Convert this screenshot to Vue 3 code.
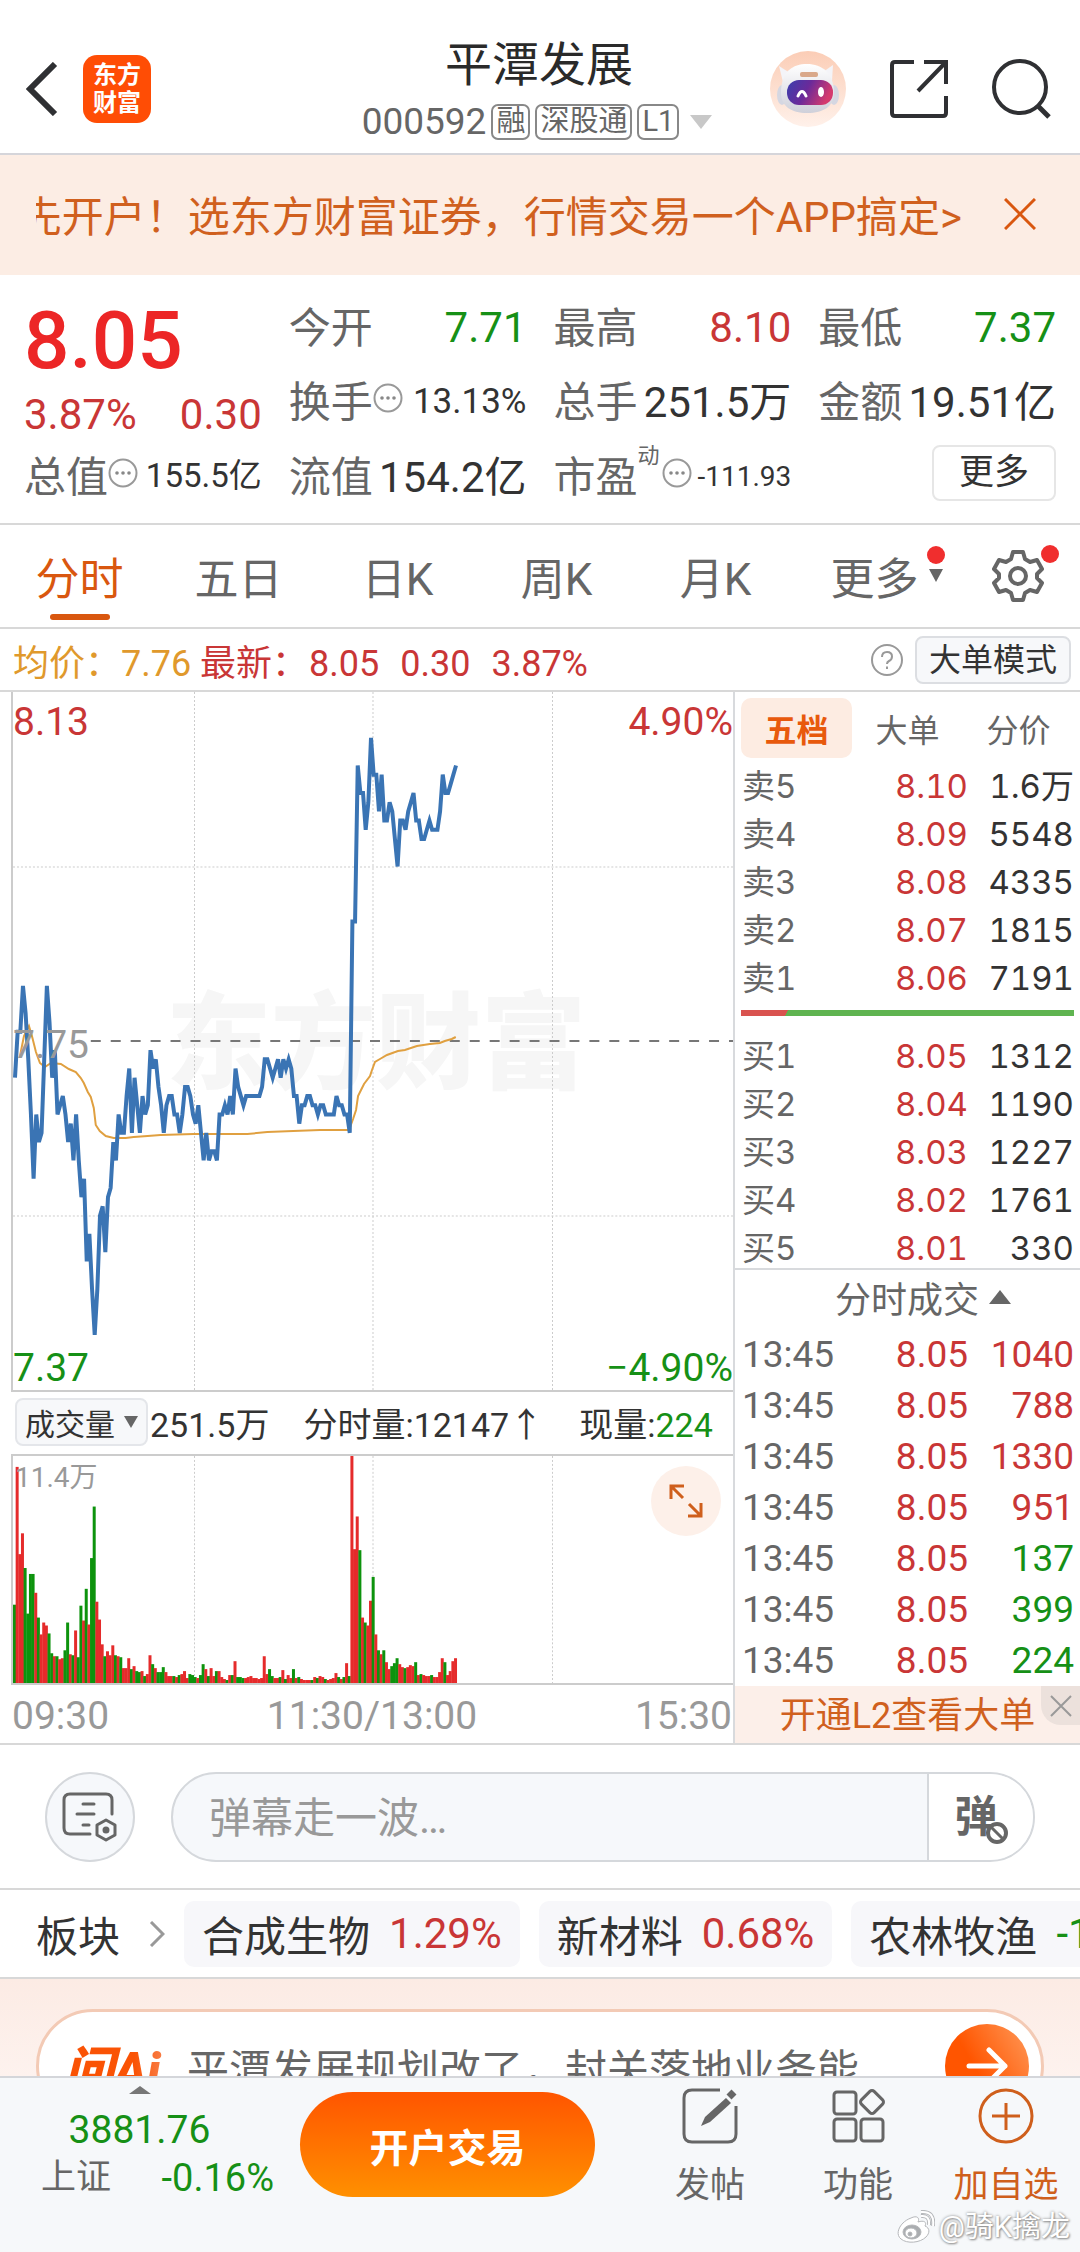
<template>
  <div class="page">
    <!-- Шапка -->
    <header class="header">
      <div class="header-side">
        <button class="icon-btn" aria-label="返回">
          <svg width="32" height="54" viewBox="0 0 32 54" fill="none" stroke="#2f3033" stroke-width="6">
            <path d="M29 2 L4 27 L29 52" />
          </svg>
        </button>
        <div class="logo"><span>东方</span><span>财富</span></div>
      </div>

      <div class="header-center">
        <h1 class="title">平潭发展</h1>
        <div class="code">
          <span>000592</span>
          <span class="tag">融</span>
          <span class="tag">深股通</span>
          <span class="tag">L1</span>
          <svg class="code-arrow" width="22" height="14" viewBox="0 0 22 14"><path d="M0 0H22L11 14Z" fill="#c8c8c8" /></svg>
        </div>
      </div>

      <div class="header-side header-right">
        <button class="icon-btn" aria-label="助手">
          <svg width="76" height="76" viewBox="0 0 76 76">
            <defs>
              <linearGradient id="halo" x1="0" y1="0" x2="0" y2="1">
                <stop offset="0" stop-color="#fbcdb6" />
                <stop offset="1" stop-color="#fff1ea" />
              </linearGradient>
              <linearGradient id="visor" x1="0" y1="0" x2="1" y2="0.3">
                <stop offset="0" stop-color="#3a3fae" />
                <stop offset="0.5" stop-color="#6a2a9a" />
                <stop offset="1" stop-color="#d43a6e" />
              </linearGradient>
              <linearGradient id="helmet" x1="0" y1="0" x2="0" y2="1">
                <stop offset="0" stop-color="#ffffff" />
                <stop offset="1" stop-color="#cfd0da" />
              </linearGradient>
            </defs>
            <circle cx="38" cy="38" r="38" fill="url(#halo)" />
            <path d="M9 15 L20 22 L13 31 Z" fill="#f4f4f8" />
            <path d="M63 14 L53 21 L62 30 Z" fill="#f4f4f8" />
            <ellipse cx="12" cy="44" rx="5" ry="10" fill="#d5d7e2" />
            <ellipse cx="64" cy="44" rx="5" ry="10" fill="#d5d7e2" />
            <path d="M11 42 C11 20 23 13 37 13 C52 13 64 22 64 42 C64 55 54 62 37 62 C21 62 11 55 11 42 Z" fill="url(#helmet)" />
            <rect x="30" y="21" width="18" height="5" rx="2" fill="#d9a88a" />
            <rect x="17" y="29" width="46" height="25" rx="12" fill="url(#visor)" />
            <path d="M28 45 q4 -9 8 0" fill="none" stroke="#fff" stroke-width="3" stroke-linecap="round" />
            <ellipse cx="51" cy="41" rx="3" ry="5" fill="#fff" />
          </svg>
        </button>
        <button class="icon-btn" aria-label="分享">
          <svg width="58" height="58" viewBox="0 0 58 58" fill="none" stroke="#2f3033" stroke-width="4">
            <path d="M24 2H5q-3 0-3 3V53q0 3 3 3H53q3 0 3-3V36" />
            <path d="M34 2H56V24M56 2L28 31" />
          </svg>
        </button>
        <button class="icon-btn" aria-label="搜索">
          <svg width="60" height="60" viewBox="0 0 60 60" fill="none" stroke="#2f3033" stroke-width="4">
            <circle cx="28" cy="28" r="26" />
            <path d="M46 47L57 58" stroke-width="5" />
          </svg>
        </button>
      </div>
    </header>

    <!-- Рекламная строка -->
    <div class="promo">
      <a href="#" class="promo-text"><span>先开户！选东方财富证券，行情交易一个APP搞定&gt;</span></a>
      <button class="icon-btn" aria-label="关闭">
        <svg width="32" height="32" viewBox="0 0 32 32" stroke="#d9570f" stroke-width="3"><path d="M1 1L31 31M31 1L1 31" /></svg>
      </button>
    </div>

    <!-- Котировка -->
    <section class="quote">
      <div class="price-box">
        <strong class="price">8.05</strong>
        <div class="price-diff"><span>3.87%</span><span>0.30</span></div>
      </div>
      <div v-for="q in quotes" :key="q.label" class="quote-item">
        <span class="quote-label">{{ q.label }}<sup v-if="q.sup" class="quote-sup">{{ q.sup }}</sup></span>
        <svg v-if="q.dots" class="dots" :class="{ shifted: q.sup }" width="30" height="30" viewBox="0 0 30 30">
          <circle cx="15" cy="15" r="13.5" fill="none" stroke="#999" stroke-width="2" />
          <circle v-for="x in [9, 15, 21]" :key="x" :cx="x" cy="15" r="1.8" fill="#888" />
        </svg>
        <span class="quote-value" :class="[q.size, q.color, { num: q.num }]">{{ q.value }}</span>
      </div>
      <div class="quote-item quote-more"><button class="more-btn">更多</button></div>
    </section>

    <!-- Периоды графика -->
    <nav class="tabs">
      <button v-for="(t, i) in tabs" :key="t" class="tab" :class="{ active: i === 0 }">
        {{ t }}
        <span v-if="t === '更多'" class="tab-mark">
          <i class="dot"></i>
          <svg width="14" height="13" viewBox="0 0 14 13"><path d="M0 0H14L7 13Z" fill="#666" /></svg>
        </span>
      </button>
      <button class="icon-btn gear" aria-label="设置">
        <svg width="52" height="52" viewBox="0 0 52 52" fill="none" stroke="#666" stroke-width="4" stroke-linejoin="round">
          <path d="M21 2H31L33 9L38 12L45 10L50 19L45 24V28L50 33L45 42L38 40L33 43L31 50H21L19 43L14 40L7 42L2 33L7 28V24L2 19L7 10L14 12L19 9Z" />
          <circle cx="26" cy="26" r="8" />
        </svg>
        <i class="dot"></i>
      </button>
    </nav>

    <div class="info">
      <div class="info-avg"><span>均价：</span><span>7.76</span></div>
      <div class="info-last">
        <span>最新：</span><span>8.05</span><span>0.30</span><span>3.87%</span>
      </div>
      <svg class="help" width="32" height="32" viewBox="0 0 32 32" fill="none" stroke="#999" stroke-width="2">
        <circle cx="16" cy="16" r="15" />
        <path d="M11 13q0-5 5-5t5 4.500q0 3-3 4.500q-2 1-2 3" />
        <path d="M16 22.500v2.500" />
      </svg>
      <button class="mode-btn">大单模式</button>
    </div>

    <main class="main">
      <div class="left">
        <div class="chart price-chart">
          <div class="brand">东方财富</div>
          <svg viewBox="0 0 722 698" preserveAspectRatio="none">
            <g class="grid">
              <path d="M182 0V698M361 0V698M541 0V698M0 175H722M0 524H722" />
            </g>
            <path d="M78 349H722" stroke="#777" stroke-width="2" stroke-dasharray="10 10" />
            <path :d="avgPath" fill="none" stroke="#e0a040" stroke-width="2" />
            <polyline :points="pricePoints" fill="none" stroke="#3a74b4" stroke-width="4" />
          </svg>
          <span class="lbl top-left red">8.13</span>
          <span class="lbl top-right red">4.90%</span>
          <span class="lbl mid-left">7.75</span>
          <span class="lbl bottom-left green">7.37</span>
          <span class="lbl bottom-right green">−4.90%</span>
        </div>

        <div class="vol-info">
          <button class="vol-btn">成交量<svg width="14" height="12" viewBox="0 0 14 12"><path d="M0 0H14L7 12Z" fill="#666" /></svg></button>
          <span class="vol-total">251.5万</span>
          <span class="vol-minute">分时量:12147↑</span>
          <span>现量:<b class="green">224</b></span>
        </div>

        <div class="chart vol-chart">
          <svg viewBox="0 0 722 229" preserveAspectRatio="none">
            <g class="grid"><path d="M182 0V229M361 0V229M541 0V229" /></g>
            <rect
              v-for="(v, i) in volumes"
              :key="i"
              :x="i * step"
              :y="229 - Math.abs(v)"
              width="3"
              :height="Math.abs(v)"
              :fill="v > 0 ? '#e52b2b' : '#0d930d'"
            />
          </svg>
          <span class="vol-max">11.4万</span>
          <button class="expand" aria-label="放大">
            <svg width="34" height="34" viewBox="0 0 34 34" fill="none" stroke="#cf5f1c" stroke-width="3">
              <path d="M2 15V2H15M2 2L14 14M32 19V32H19M32 32L20 20" />
            </svg>
          </button>
        </div>

        <div class="axis"><span>09:30</span><span>11:30/13:00</span><span>15:30</span></div>
      </div>

      <!-- Стакан и лента сделок -->
      <aside class="right">
        <div class="book-tabs">
          <button class="active">五档</button>
          <button>大单</button>
          <button>分价</button>
        </div>
        <table class="book">
          <tbody>
            <tr v-for="r in sells" :key="r[0]">
              <th scope="row">{{ r[0] }}</th>
              <td class="red">{{ r[1] }}</td>
              <td>{{ r[2] }}</td>
            </tr>
          </tbody>
        </table>
        <div class="ratio"></div>
        <table class="book">
          <tbody>
            <tr v-for="r in buys" :key="r[0]">
              <th scope="row">{{ r[0] }}</th>
              <td class="red">{{ r[1] }}</td>
              <td>{{ r[2] }}</td>
            </tr>
          </tbody>
        </table>
        <button class="deals-head">
          分时成交<svg width="22" height="14" viewBox="0 0 22 14"><path d="M0 14H22L11 0Z" fill="#666" /></svg>
        </button>
        <table class="book deals">
          <tbody>
            <tr v-for="(d, i) in deals" :key="i">
              <th scope="row">13:45</th>
              <td class="red">8.05</td>
              <td :class="d > 0 ? 'red' : 'green'">{{ Math.abs(d) }}</td>
            </tr>
          </tbody>
        </table>
        <div class="level2">
          <a href="#">开通L2查看大单</a>
          <button aria-label="关闭">
            <svg width="22" height="22" viewBox="0 0 22 22" stroke="#999" stroke-width="2"><path d="M1 1L21 21M21 1L1 21" /></svg>
          </button>
        </div>
      </aside>
    </main>

    <!-- Комментарии -->
    <div class="danmu">
      <button class="danmu-set" aria-label="弹幕设置">
        <svg width="56" height="50" viewBox="0 0 56 50" fill="none" stroke="#666" stroke-width="3" stroke-linecap="round">
          <path d="M28 42H8q-6 0-6-6V8q0-6 6-6H44q6 0 6 6V22" />
          <path d="M21 12H32M15 22H32M21 33H27" />
          <path d="M44 28L53 33V43L44 48L35 43V33Z" stroke-linejoin="round" />
          <circle cx="44" cy="38" r="2" fill="#666" />
        </svg>
      </button>
      <div class="danmu-box">
        <input type="text" placeholder="弹幕走一波…" aria-label="弹幕" />
        <button class="danmu-toggle" aria-label="关闭弹幕">
          弹
          <svg width="24" height="24" viewBox="0 0 24 24" stroke="#666" stroke-width="4">
            <circle cx="12" cy="12" r="9" fill="#fff" />
            <path d="M6 6L18 18" stroke-width="3" />
          </svg>
        </button>
      </div>
    </div>

    <!-- Сектора -->
    <div class="sectors">
      <a href="#" class="sectors-title">
        板块
        <svg width="16" height="26" viewBox="0 0 16 26" fill="none" stroke="#999" stroke-width="3"><path d="M2 1L14 13L2 25" /></svg>
      </a>
      <a v-for="s in sectors" :key="s.name" href="#" class="chip">
        <span>{{ s.name }}</span>
        <span :class="s.up ? 'red' : 'green'">{{ s.value }}</span>
      </a>
    </div>

    <div class="ai">
      <div class="ai-pill">
        <span class="ai-logo">问Ai</span>
        <span class="ai-text">平潭发展规划改了，封关落地业务能</span>
        <button class="ai-go" aria-label="提问">
          <svg width="42" height="40" viewBox="0 0 42 40" fill="none" stroke="#fff" stroke-width="5" stroke-linecap="round" stroke-linejoin="round">
            <path d="M3 20H39M23 4L39 20L23 36" />
          </svg>
        </button>
      </div>
    </div>

    <!-- Нижняя панель -->
    <footer class="bottom">
      <div class="index">
        <div class="index-top">
          <svg width="22" height="8" viewBox="0 0 22 8"><path d="M0 8H22L11 0Z" fill="#777" /></svg>
          <span class="index-value green">3881.76</span>
        </div>
        <div class="index-row"><span>上证</span><span class="index-diff green">-0.16%</span></div>
      </div>
      <button class="trade">开户交易</button>
      <div class="actions">
        <button class="action">
          <svg width="56" height="56" viewBox="0 0 56 56" fill="none" stroke="#666" stroke-width="3">
            <path d="M38 2H10q-8 0-8 8V46q0 8 8 8H46q8 0 8-8V18" />
            <path d="M44 10L49 15L28 34L19 38L23 29Z" fill="#666" stroke="none" />
            <path d="M47 9L52 4" stroke-width="7" />
          </svg>
          发帖
        </button>
        <button class="action">
          <svg width="56" height="56" viewBox="0 0 56 56" fill="none" stroke="#666" stroke-width="3">
            <rect x="4" y="4" width="22" height="22" rx="3" />
            <rect x="4" y="31" width="22" height="22" rx="3" />
            <rect x="31" y="31" width="22" height="22" rx="3" />
            <rect x="33" y="5" width="18" height="18" rx="3" transform="rotate(45 42 14)" />
          </svg>
          功能
        </button>
        <button class="action orange">
          <svg width="56" height="56" viewBox="0 0 56 56" fill="none" stroke="#cf5f1c" stroke-width="3">
            <circle cx="28" cy="28" r="26" />
            <path d="M28 15V42M14 28H42" />
          </svg>
          加自选
        </button>
      </div>
      <div class="author">
        <svg width="38" height="34" viewBox="0 0 38 34" fill="#fff" stroke="#b5b7ba" stroke-width="1">
          <path d="M14 8C20 5 23 8 21 12C27 10 30 12 28 16C33 18 33 23 29 27C23 33 10 34 4 29C-1 25 1 18 6 13C8 11 11 9 14 8Z" />
          <ellipse cx="15" cy="22" rx="9" ry="7" fill="#aaadb0" />
          <ellipse cx="14" cy="23" rx="6" ry="5" />
          <circle cx="13" cy="24" r="2" fill="#aaadb0" />
          <path d="M24 6Q33 5 32 15M24 2Q38 1 36 16" fill="none" stroke="#b5b7ba" stroke-width="4" />
          <path d="M24 6Q33 5 32 15M24 2Q38 1 36 16" fill="none" stroke="#fff" stroke-width="2" />
        </svg>
        @骑K擒龙
      </div>
    </footer>
  </div>
</template>

<script setup>
import { computed } from "vue";

const quotes = [
  { label: "今开", value: "7.71", color: "green", num: true },
  { label: "最高", value: "8.10", color: "red", num: true },
  { label: "最低", value: "7.37", color: "green", num: true },
  { label: "换手", value: "13.13%", dots: true, size: "s35", num: true },
  { label: "总手", value: "251.5万" },
  { label: "金额", value: "19.51亿" },
  { label: "总值", value: "155.5亿", dots: true, size: "s33" },
  { label: "流值", value: "154.2亿" },
  { label: "市盈", sup: "动", value: "-111.93", dots: true, size: "s28", num: true },
];

const tabs = ["分时", "五日", "日K", "周K", "月K", "更多"];

const sells = [
  ["卖5", "8.10", "1.6万"],
  ["卖4", "8.09", "5548"],
  ["卖3", "8.08", "4335"],
  ["卖2", "8.07", "1815"],
  ["卖1", "8.06", "7191"],
];
const buys = [
  ["买1", "8.05", "1312"],
  ["买2", "8.04", "1190"],
  ["买3", "8.03", "1227"],
  ["买4", "8.02", "1761"],
  ["买5", "8.01", "330"],
];

// минус — продажа
const deals = [1040, 788, 1330, 951, -137, -399, -224];

const sectors = [
  { name: "合成生物", value: "1.29%", up: true },
  { name: "新材料", value: "0.68%", up: true },
  { name: "农林牧渔", value: "-1", up: false },
];

// цена в фэнях, по точке на минуту
const prices = [
  771, 776, 776, 781, 778, 773, 767, 760, 767, 764,
  765, 773, 781, 777, 771, 774, 767, 768, 769, 767,
  764, 766, 762, 767, 762, 758, 760, 751, 754, 748,
  743, 748, 756, 757, 752, 758, 759, 764, 762, 767,
  765, 765, 769, 772, 765, 771, 768, 765, 769, 767,
  768, 774, 772, 773, 770, 768, 765, 768, 769, 769,
  767, 767, 765, 767, 770, 770, 769, 767, 766, 768,
  765, 762, 765, 762, 763, 763, 762, 767, 767, 768,
  767, 769, 767, 772, 770, 769, 768, 769, 769, 769,
  769, 769, 769, 770, 773, 773, 772, 771, 772, 773,
  771, 773, 772, 773, 772, 769, 769, 766, 768, 768,
  769, 769, 768, 768, 767, 768, 768, 767, 767, 767,
  767, 769, 768, 768, 767, 767, 765, 788, 788, 805,
  802, 802, 798, 801, 808, 804, 804, 800, 804, 799,
  799, 801, 800, 797, 794, 799, 799, 798, 800, 801,
  802, 799, 799, 797, 797, 798, 799, 798, 798, 798,
  800, 804, 802, 802, 803, 804, 805,
];

// объём: плюс — красный столбик, минус — зелёный
const volumes = [
  -79, 218, 130, 151, -116, -70, -110, -110, 91, -66,
  49, 61, 58, -50, -30, 27, -27, 24, 25, -33,
  -61, 29, -28, 53, -26, -78, 63, -95, 59, -126,
  -178, 82, 64, 39, -27, 32, 28, 38, -28, 27,
  -26, 15, 15, 25, -14, 17, -12, -11, 12, -7,
  9, 28, -19, 15, -11, -11, -16, 11, 7, 7,
  -7, 6, -8, 9, 12, 5, -9, -8, -6, 5,
  -8, -19, 14, -7, 15, 7, -12, 12, 6, 4,
  -3, 8, -8, 22, -6, -6, -5, 5, 6, 7,
  5, 5, 4, 5, 27, 9, -14, -7, 5, 5,
  -6, 13, -4, 8, 5, -14, 5, -6, 4, 3,
  3, 3, -3, 6, -5, 7, 6, -4, 3, 4,
  5, 10, -6, 4, -6, 20, -7, 229, 135, 168,
  -134, 66, -61, 58, 83, -107, 49, -33, 29, -33,
  21, 14, -17, -20, -25, 19, 16, -15, 16, 18,
  17, -21, 8, -9, 8, 7, 7, -8, 6, 6,
  11, 25, -21, 8, 12, 22, 25,
];

const avg = [
  [7, 364], [11, 344], [16, 334], [19, 344], [23, 360], [27, 371], [32, 375], [38, 371], [48, 372],
  [56, 377], [63, 380], [68, 386], [71, 391], [75, 400], [78, 405], [81, 416], [83, 433], [87, 439],
  [93, 444], [101, 446], [113, 446], [121, 445], [135, 444], [148, 443], [181, 442], [235, 442],
  [255, 440], [281, 439], [308, 438], [337, 438], [341, 427], [344, 418], [346, 404], [349, 398],
  [352, 392], [358, 384], [360, 378], [363, 370], [368, 367], [375, 363], [386, 359], [393, 358],
  [405, 354], [418, 352], [428, 351], [433, 349], [440, 347], [444, 345],
];

const step = 722 / 271;

const pricePoints = computed(() =>
  prices.map((p, i) => `${2 + i * step},${((813 - p) / 76) * 698}`).join(" ")
);
const avgPath = computed(() => "M" + avg.map((p) => p.join(" ")).join("L"));
</script>

<style>
body {
  margin: 0;
  background: #fff;
}
</style>

<style scoped>
.page {
  min-height: 100vh;
  display: flex;
  flex-direction: column;
  overflow: hidden;
  color: #333;
  background: #fff;
  font-family: Roboto, "Noto Sans CJK SC", sans-serif;
}

.page * {
  box-sizing: border-box;
}

button {
  padding: 0;
  border: 0;
  background: none;
  color: inherit;
  font: inherit;
}

a {
  color: inherit;
  text-decoration: none;
}

svg {
  display: block;
  flex: none;
}

.red {
  color: #c93636;
}
.green {
  color: #169016;
}

/* шапка */
.header {
  display: grid;
  grid-template-columns: 1fr auto 1fr;
  padding: 36px 28px 11px 26px;
  border-bottom: 2px solid #d5d5da;
}
.header-side {
  display: flex;
  align-items: center;
  gap: 25px;
}
.header-right {
  justify-content: flex-end;
  gap: 44px;
}
.logo {
  display: flex;
  flex-direction: column;
  justify-content: center;
  width: 68px;
  height: 68px;
  border-radius: 14px;
  background: #ff4d05;
  color: #fff;
  font-size: 24px;
  font-weight: 700;
  line-height: 28px;
  text-align: center;
}
.header-center {
  display: flex;
  flex-direction: column;
  align-items: center;
}
.title {
  margin: 0;
  font-size: 47px;
  font-weight: 400;
  line-height: 57px;
  color: #2a2a2a;
}
.code {
  display: flex;
  align-items: center;
  gap: 5px;
  height: 49px;
  padding: 8px 4px 0 0;
  font-size: 37px;
  color: #666;
}
.tag {
  height: 36px;
  padding: 0 3px;
  border: 2px solid #888;
  border-radius: 7px;
  font-size: 29px;
  line-height: 31px;
}
.code-arrow {
  margin-left: 6px;
}

/* реклама */
.promo {
  display: flex;
  align-items: center;
  gap: 42px;
  height: 120px;
  padding: 0 44px 3px 36px;
  background: #fcede4;
  color: #d0601e;
  font-size: 42px;
}
.promo-text {
  flex: 1;
  display: flex;
  justify-content: flex-end;
  overflow: hidden;
  white-space: nowrap;
}

/* котировка */
.quote {
  display: grid;
  grid-template-columns: repeat(4, 1fr);
  grid-template-rows: 74px 74px 76px;
  column-gap: 27px;
  padding: 12px 24px;
  border-bottom: 2px solid #d8d8d8;
}
.price-box {
  grid-row: span 2;
  padding-top: 4px;
}
.price {
  display: block;
  font-size: 80px;
  font-weight: 500;
  line-height: 100px;
  color: #ec2626;
}
.price-diff {
  display: flex;
  justify-content: space-between;
  font-size: 42px;
  line-height: 48px;
  color: #c93636;
}
.quote-item {
  display: flex;
  align-items: center;
  font-size: 42px;
  white-space: nowrap;
}
.quote-label {
  position: relative;
  color: #666;
}
.quote-sup {
  position: absolute;
  left: 100%;
  top: 0;
  font-size: 22px;
  line-height: 26px;
}
.shifted {
  margin-left: 24px;
}
.quote-value {
  margin-left: auto;
}
/* без иероглифов строка садится выше */
.num {
  padding-top: 6px;
}
.s35 {
  font-size: 35px;
}
.s33 {
  font-size: 33px;
}
.s28 {
  font-size: 28px;
}
.quote-more {
  justify-content: flex-end;
}
.more-btn {
  width: 124px;
  height: 56px;
  border: 2px solid #e6e6e6;
  border-radius: 8px;
  font-size: 35px;
  line-height: 52px;
}

/* вкладки */
.tabs {
  display: grid;
  grid-template-columns: repeat(6, 159fr) 126fr;
  height: 104px;
  border-bottom: 2px solid #d8d8d8;
  color: #666;
  font-size: 44px;
}
.tab {
  position: relative;
}
.tab.active {
  color: #d9570f;
}
.tab.active::after {
  content: "";
  position: absolute;
  left: calc(50% - 30px);
  bottom: 7px;
  width: 60px;
  height: 6px;
  border-radius: 3px;
  background: #d9570f;
}
.dot {
  display: block;
  width: 18px;
  height: 18px;
  border-radius: 50%;
  background: #f02e2e;
}
.tab-mark {
  position: absolute;
  right: 9px;
  top: 21px;
  display: grid;
  gap: 5px;
  justify-items: center;
}
.gear {
  position: relative;
  padding-left: 38px;
}
.gear .dot {
  position: absolute;
  right: 21px;
  top: 20px;
}

.info {
  display: flex;
  align-items: center;
  height: 63px;
  padding: 0 9px 0 13px;
  border-bottom: 2px solid #d8d8d8;
  font-size: 36px;
}
.info-avg {
  width: 187px;
  color: #e0992c;
}
.info-last {
  display: flex;
  align-items: baseline;
  gap: 21px;
  color: #c93636;
}
.info-last span:first-child {
  margin-right: -20px;
}
.help {
  margin-left: auto;
}
.mode-btn {
  width: 156px;
  height: 48px;
  margin-left: 12px;
  border: 2px solid #dcdee2;
  border-radius: 8px;
  background: #f7f8fa;
  font-size: 32px;
  line-height: 44px;
}

/* графики */
.main {
  display: grid;
  grid-template-columns: minmax(0, 1fr) 345px;
  border-bottom: 2px solid #d8d8d8;
}
.left {
  padding-left: 11px;
  border-right: 2px solid #d8dadd;
}
.chart {
  position: relative;
  border-left: 2px solid #ccc;
  border-bottom: 2px solid #ccc;
}
.chart > svg {
  position: relative;
  width: 100%;
  height: 100%;
}
.price-chart {
  height: 700px;
}
.vol-chart {
  height: 231px;
  border-top: 2px solid #ccc;
}
.grid {
  fill: none;
  stroke: #ccc;
  stroke-width: 1;
  stroke-dasharray: 2 2;
}
.brand {
  position: absolute;
  left: 153px;
  top: 283px;
  color: #f6f6f6;
  font-size: 105px;
  font-weight: 900;
  line-height: 140px;
}
.lbl {
  position: absolute;
  font-size: 39px;
  line-height: 48px;
}
.top-left {
  left: 0;
  top: 6px;
}
.top-right {
  right: 0;
  top: 6px;
}
.mid-left {
  left: 0;
  top: 329px;
  color: #999;
}
.bottom-left {
  left: 0;
  bottom: -2px;
}
.bottom-right {
  right: 0;
  bottom: -2px;
}
.vol-info {
  display: flex;
  align-items: center;
  height: 62px;
  padding: 0 0 2px 4px;
  font-size: 34px;
  white-space: nowrap;
}
.vol-info b {
  font-weight: 400;
}
.vol-btn {
  display: flex;
  align-items: center;
  gap: 9px;
  height: 48px;
  padding: 0 8px;
  border: 2px solid #e4e6ea;
  border-radius: 8px;
  background: #f7f8fa;
  font-size: 30px;
}
.vol-total {
  margin: 0 34px 0 2px;
}
.vol-minute {
  margin-right: 36px;
}
.vol-max {
  position: absolute;
  left: 2px;
  top: 4px;
  color: #999;
  font-size: 28px;
  line-height: 36px;
}
.expand {
  position: absolute;
  right: 12px;
  top: 10px;
  display: grid;
  place-items: center;
  width: 70px;
  height: 70px;
  border-radius: 50%;
  background: #fdf0e9;
}
.axis {
  display: flex;
  justify-content: space-between;
  height: 58px;
  padding: 0 1px;
  color: #999;
  font-size: 39px;
  line-height: 62px;
}

/* стакан */
.right {
  font-family: Inter, "Noto Sans CJK SC", sans-serif;
  font-variant-numeric: tabular-nums;
}
.book-tabs {
  display: grid;
  grid-template-columns: repeat(3, 111px);
  padding: 6px 6px 4px;
  color: #666;
  font-size: 32px;
}
.book-tabs button {
  height: 60px;
  border-radius: 10px;
}
.book-tabs .active {
  background: #fdece2;
  color: #e8590c;
  font-weight: 700;
}
.book {
  width: 100%;
  border-collapse: collapse;
  table-layout: fixed;
  font-size: 33px;
}
.book tr {
  height: 48px;
}
.book th,
.book td {
  padding: 0;
  line-height: 48px;
}
.book th {
  width: 108px;
  padding-left: 7px;
  color: #666;
  font-weight: 400;
  text-align: left;
}
.book td {
  width: 125px;
  text-align: right;
}
.book td:last-child {
  width: auto;
  padding-right: 6px;
}
.ratio {
  height: 6px;
  margin: 8px 6px 16px;
  background: linear-gradient(120deg, #d9534f 14%, #5fb450 14%);
}
.deals-head {
  display: flex;
  align-items: center;
  justify-content: center;
  gap: 10px;
  width: 100%;
  height: 61px;
  margin-top: -4px;
  padding: 0 0 5px 31px;
  border-top: 2px solid #d8dadd;
  color: #666;
  font-size: 36px;
}
.deals {
  font-family: Roboto, sans-serif;
  font-size: 37px;
}
.deals tr,
.deals th,
.deals td {
  height: 51px;
  line-height: 51px;
}
.level2 {
  position: relative;
  height: 57px;
  background: #fcefe9;
  color: #d0601e;
  font-family: Roboto, "Noto Sans CJK SC", sans-serif;
  font-size: 36px;
  line-height: 60px;
  text-align: center;
}
.level2 button {
  position: absolute;
  right: 0;
  top: 0;
  display: grid;
  place-items: center;
  width: 39px;
  height: 39px;
  border-bottom-left-radius: 20px;
  background: #ece1dc;
}

/* комментарии */
.danmu {
  display: flex;
  gap: 36px;
  padding: 27px 45px 26px;
  border-bottom: 2px solid #d8d8d8;
}
.danmu-set {
  display: grid;
  place-items: center;
  width: 90px;
  height: 90px;
  border: 2px solid #d5d8dc;
  border-radius: 50%;
  background: #f6f8fb;
}
.danmu-box {
  flex: 1;
  display: flex;
  overflow: hidden;
  height: 90px;
  border: 2px solid #d5d8dc;
  border-radius: 45px;
  background: #f6f8fb;
}
.danmu-box input {
  flex: 1;
  min-width: 0;
  padding: 2px 36px 0;
  border: 0;
  outline: 0;
  background: none;
  font: inherit;
  font-size: 42px;
}
.danmu-box input::placeholder {
  color: #999;
  opacity: 1;
}
.danmu-toggle {
  position: relative;
  width: 106px;
  padding: 0 10px 8px 0;
  border-left: 2px solid #d5d8dc;
  background: #fff;
  color: #666;
  font-size: 43px;
  font-weight: 700;
}
.danmu-toggle svg {
  position: absolute;
  right: 24px;
  bottom: 15px;
}

/* сектора */
.sectors {
  display: flex;
  align-items: center;
  gap: 19px;
  height: 89px;
  padding-left: 36px;
  border-bottom: 2px solid #d8d8d8;
  font-size: 42px;
  white-space: nowrap;
}
.sectors-title {
  display: flex;
  align-items: center;
  gap: 29px;
}
.chip {
  display: flex;
  align-items: center;
  gap: 19px;
  height: 66px;
  padding: 0 18px;
  border-radius: 10px;
  background: #f7f7fa;
}

.ai {
  height: 97px;
  padding: 30px 36px 0;
  overflow: hidden;
  background: linear-gradient(#fcebe4, #fdf2ee);
}
.ai-pill {
  display: flex;
  align-items: center;
  height: 114px;
  padding: 0 12px 0 17px;
  border: 3px solid #f3cab5;
  border-radius: 58px;
  background: #fff;
  white-space: nowrap;
}
.ai-logo {
  width: 131px;
  padding-left: 8px;
  background: linear-gradient(90deg, #fa5305 60%, #f7a27e);
  background-clip: text;
  color: transparent;
  font-size: 50px;
  font-style: italic;
  font-weight: 900;
}
.ai-text {
  color: #666;
  font-size: 42px;
}
.ai-go {
  display: grid;
  place-items: center;
  width: 84px;
  height: 84px;
  margin-left: auto;
  border-radius: 50%;
  background: linear-gradient(60deg, #ff5500 40%, #ff9a5a);
}

/* нижняя панель */
.bottom {
  position: relative;
  flex: 1;
  display: flex;
  align-items: flex-start;
  min-height: 170px;
  border-top: 2px solid #d4d6da;
  background: #f6f8fa;
}
.index {
  width: 300px;
  padding: 8px 26px 0 41px;
}
.index-top {
  display: flex;
  flex-direction: column;
  align-items: center;
  gap: 13px;
  padding-right: 36px;
}
.index-value {
  font-size: 39px;
  line-height: 46px;
}
.index-row {
  display: flex;
  justify-content: space-between;
  font-size: 35px;
  line-height: 50px;
  color: #666;
}
.index-diff {
  font-size: 38px;
}
.trade {
  width: 295px;
  height: 105px;
  margin-top: 14px;
  border-radius: 53px;
  background: linear-gradient(#ff5500, #ff9000);
  color: #fff;
  font-size: 39px;
  font-weight: 700;
}
.actions {
  flex: 1;
  display: flex;
  padding: 10px 0 0 41px;
}
.action {
  flex: 1;
  display: flex;
  flex-direction: column;
  align-items: center;
  gap: 17px;
  color: #666;
  font-size: 35px;
  line-height: 50px;
}
.orange {
  color: #cf5f1c;
}
.author {
  position: absolute;
  right: 10px;
  bottom: 8px;
  display: flex;
  align-items: center;
  gap: 4px;
  color: #fff;
  font-size: 29px;
  line-height: 34px;
  text-shadow: 0 0 3px #888, 1px 1px 2px #999;
}
</style>
